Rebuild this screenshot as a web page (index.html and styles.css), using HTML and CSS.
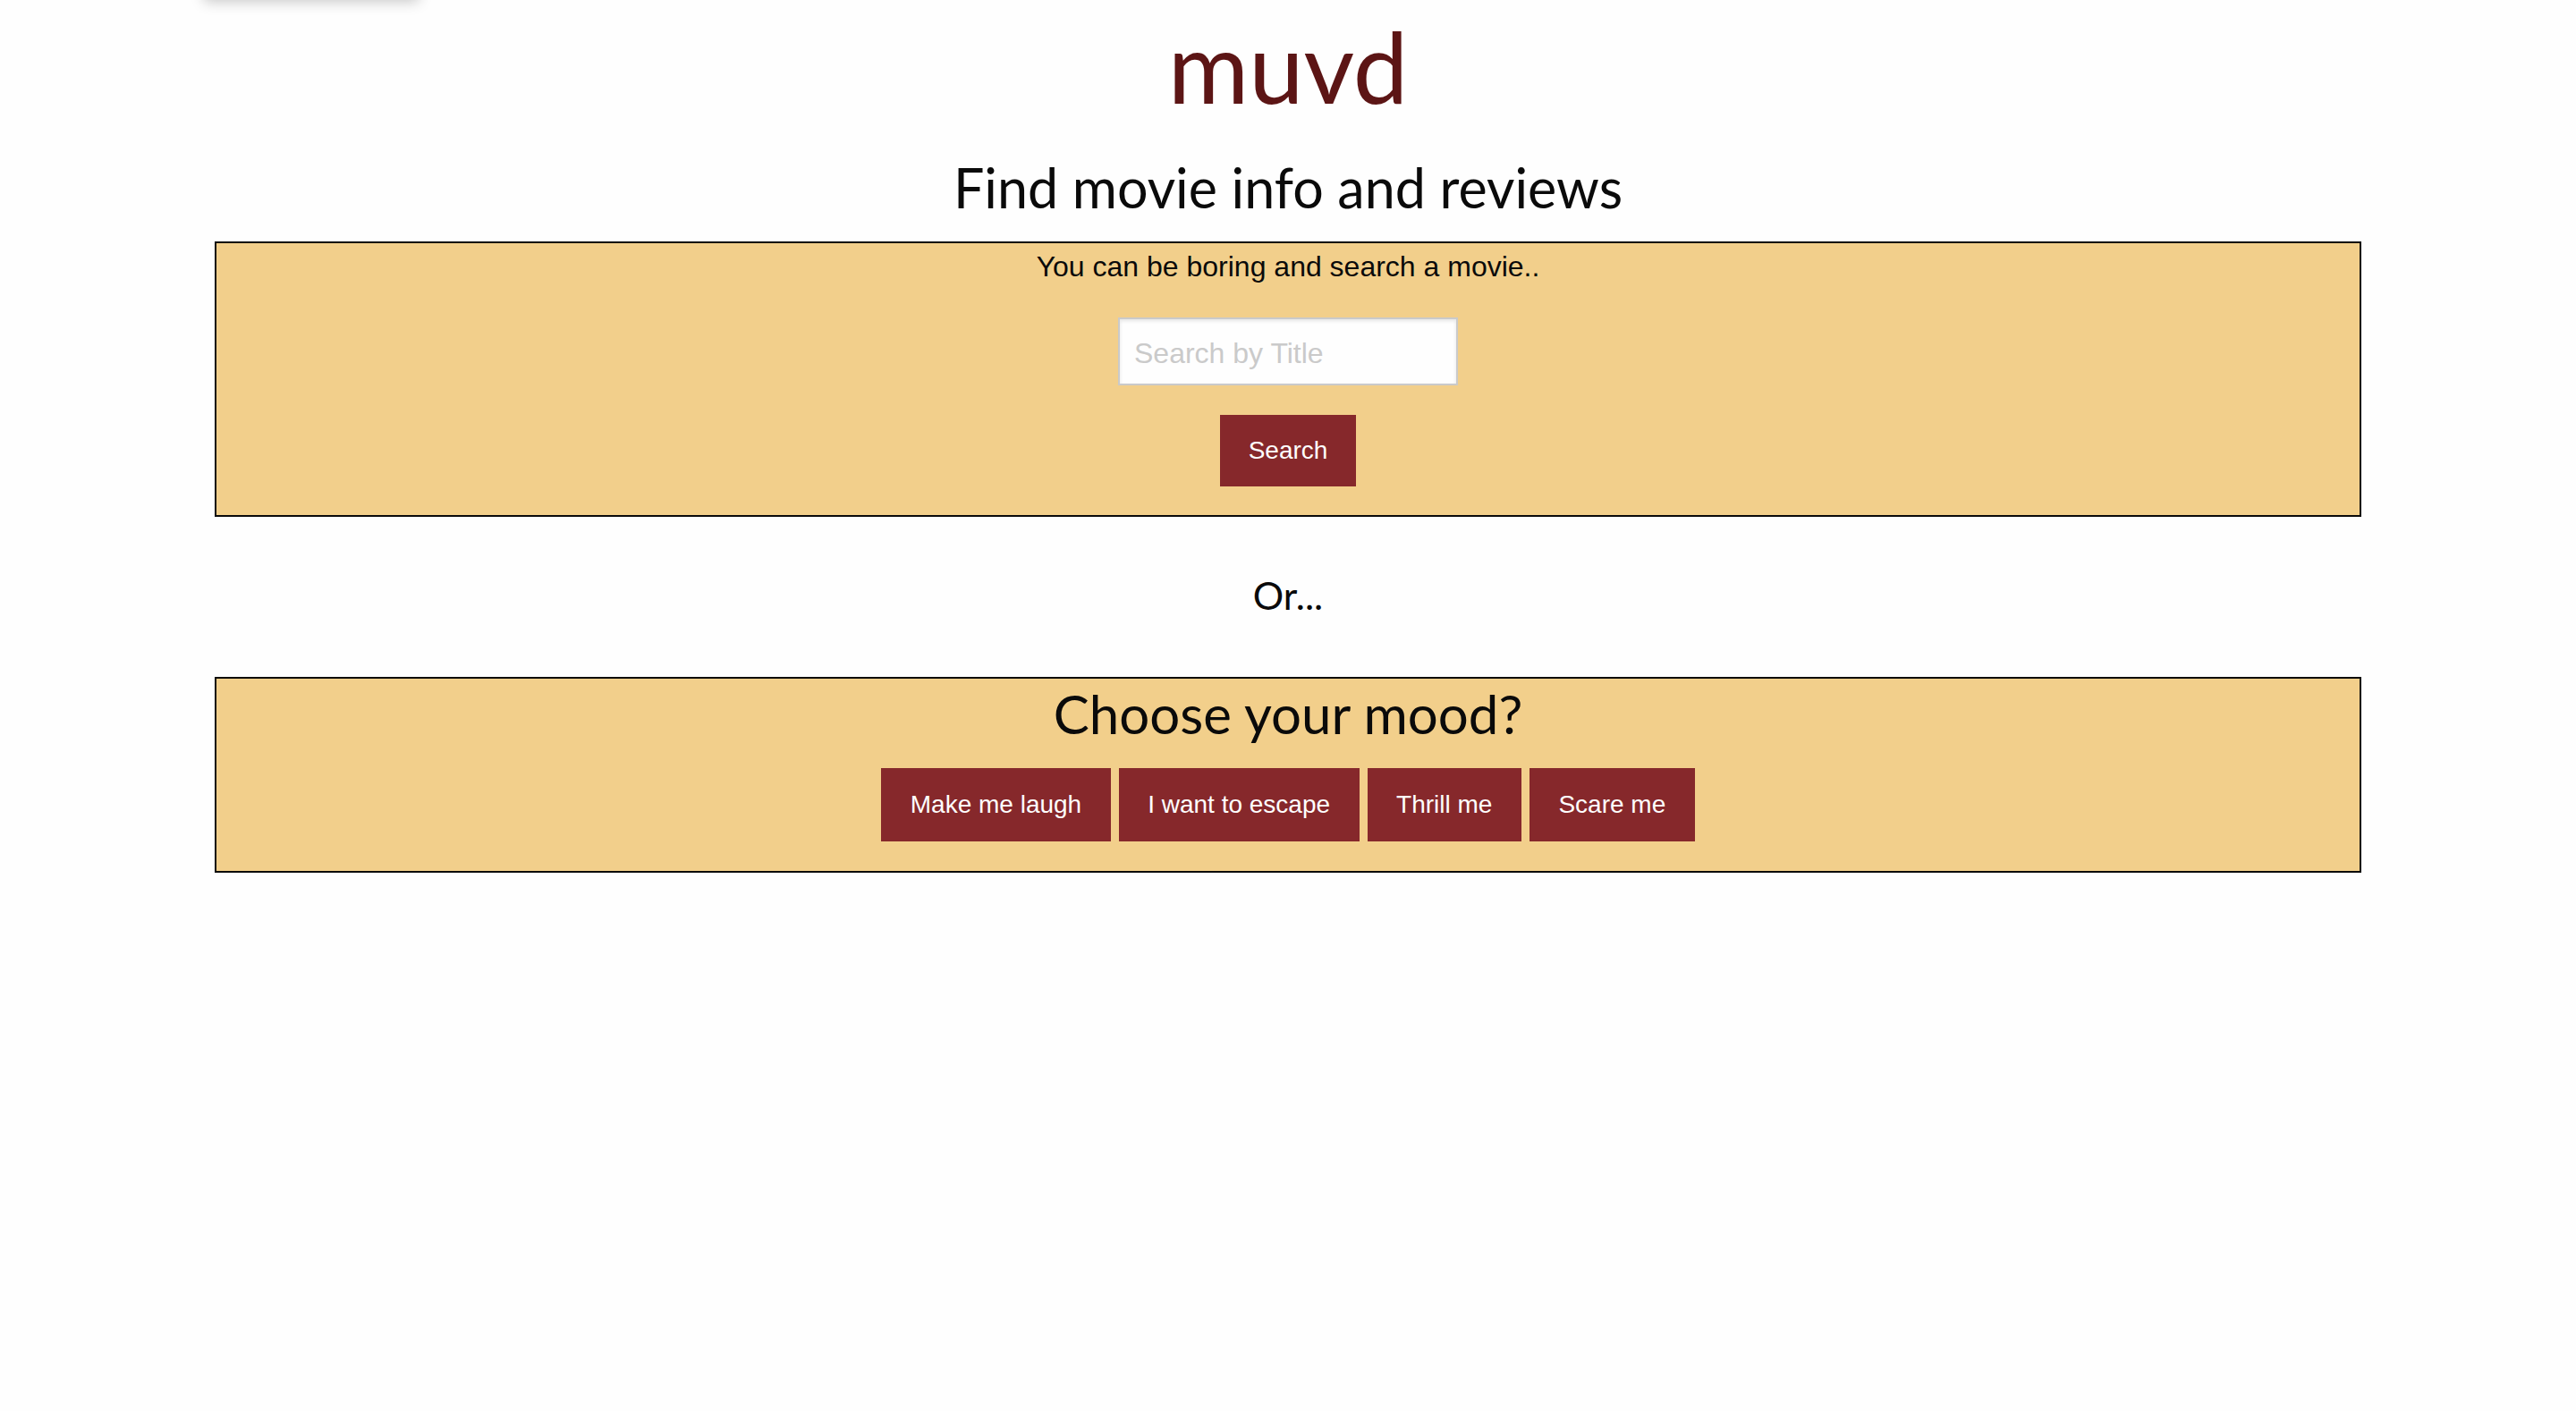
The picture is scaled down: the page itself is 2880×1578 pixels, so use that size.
FILE: index.html
```html
<!DOCTYPE html>
<html lang="en">
<head>
<meta charset="utf-8">
<title>muvd</title>
<link rel="stylesheet" href="styles.css">
</head>
<body>
<div class="top-tab"></div>
<main class="page">
  <h1 class="logo">muvd</h1>
  <h2 class="tagline">Find movie info and reviews</h2>
  <section class="panel search-panel">
    <p class="panel-text">You can be boring and search a movie..</p>
    <input class="search-input" type="text" placeholder="Search by Title">
    <button class="btn search-btn" type="button">Search</button>
  </section>
  <p class="or">Or...</p>
  <section class="panel mood-panel">
    <h2 class="mood-title">Choose your mood?</h2>
    <div class="mood-buttons">
      <button class="btn mood-btn" type="button">Make me laugh</button>
      <button class="btn mood-btn" type="button">I want to escape</button>
      <button class="btn mood-btn" type="button">Thrill me</button>
      <button class="btn mood-btn" type="button">Scare me</button>
    </div>
  </section>
</main>
</body>
</html>
```

FILE: styles.css
```css
* { box-sizing: border-box; }

html, body {
  margin: 0;
  padding: 0;
  background: #fefefe;
}

body {
  font-family: "Liberation Sans", Arial, sans-serif;
  color: #0a0a0a;
  position: relative;
  min-height: 1578px;
}

.top-tab {
  position: absolute;
  left: 228px;
  top: -60px;
  width: 240px;
  height: 60px;
  background: #fefefe;
  box-shadow: 0 2px 14px rgba(0, 0, 0, 0.22);
}

.page {
  width: 2400px;
  margin: 0 auto;
  display: flex;
  flex-direction: column;
  align-items: stretch;
}

.logo {
  margin: 7.4px 0 0;
  font-family: Lato, "Open Sans", sans-serif;
  font-weight: 400;
  font-size: 110px;
  line-height: 1.2;
  color: #5c1515;
  text-align: center;
}

.tagline {
  margin: 33.6px 0 0;
  font-family: Lato, "Open Sans", sans-serif;
  font-weight: 400;
  font-size: 61px;
  line-height: 1.2;
  text-align: center;
}

.panel {
  background: #f2cf8b;
  border: 2px solid #0a0a0a;
  display: flex;
  flex-direction: column;
  align-items: center;
}

.search-panel {
  margin-top: 23.8px;
  padding: 2px 0 32px;
}

.panel-text {
  margin: 0;
  font-size: 32px;
  line-height: 48px;
}

.search-input {
  margin-top: 33px;
  width: 380px;
  height: 76px;
  padding: 5px 16px 0;
  border: 2px solid #cacaca;
  background: #fefefe;
  box-shadow: inset 0 2px 4px rgba(10, 10, 10, 0.1);
  font-family: "Liberation Sans", Arial, sans-serif;
  font-size: 32px;
  color: #0a0a0a;
  outline: none;
}

.search-input::placeholder {
  color: #cacaca;
}

.btn {
  border: 0;
  background: #86282b;
  color: #fefefe;
  font-family: "Liberation Sans", Arial, sans-serif;
  font-size: 28px;
  line-height: 28px;
  padding: 26px 32px;
  cursor: pointer;
}

.search-btn {
  margin-top: 33px;
}

.or {
  margin: 62.3px 0 0;
  font-family: Lato, "Open Sans", sans-serif;
  font-size: 43px;
  line-height: 1.2;
  text-align: center;
}

.mood-panel {
  margin-top: 64.8px;
  padding: 4px 0 32.7px;
}

.mood-title {
  margin: 0;
  font-family: Lato, "Open Sans", sans-serif;
  font-weight: 400;
  font-size: 60px;
  line-height: 70px;
}

.mood-buttons {
  margin-top: 26.8px;
  display: flex;
  gap: 9px;
  justify-content: center;
}

.mood-btn {
  padding: 27px 32.5px;
}
```
